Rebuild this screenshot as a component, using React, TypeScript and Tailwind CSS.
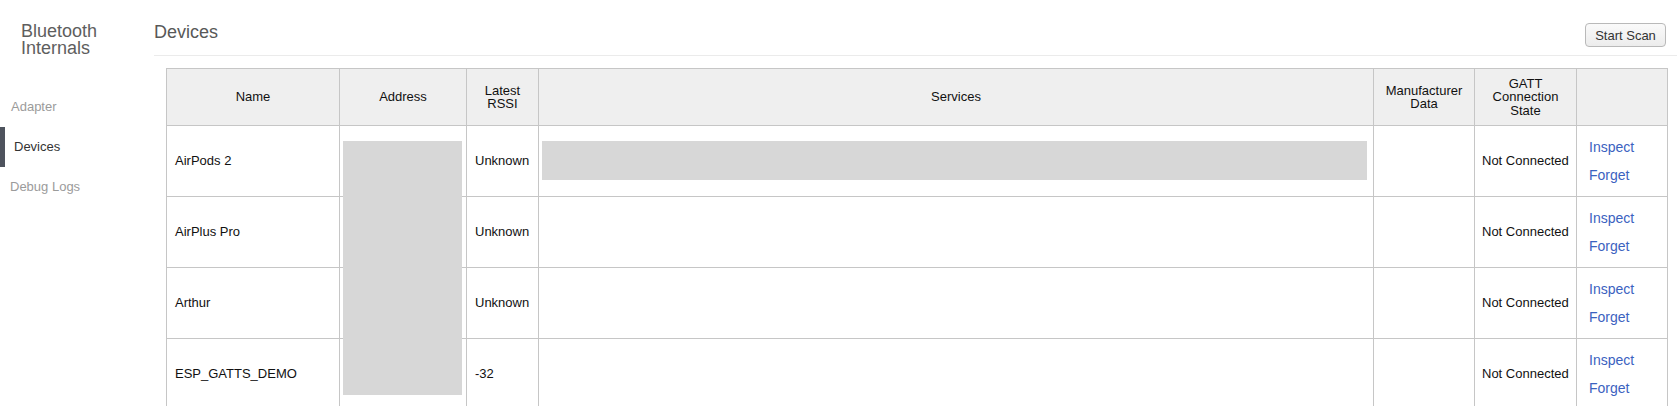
import React from "react";

const rows = [
  { name: "AirPods 2", rssi: "Unknown", services: true },
  { name: "AirPlus Pro", rssi: "Unknown", services: false },
  { name: "Arthur", rssi: "Unknown", services: false },
  { name: "ESP_GATTS_DEMO", rssi: "-32", services: false },
];

const cell = "border-r border-b border-[#c6c6c6] flex items-center whitespace-nowrap";

export default function App() {
  return (
    <div
      className="flex w-[1677px] h-[406px] overflow-hidden bg-white text-[13px] text-[#111]"
      style={{ fontFamily: '"Liberation Sans", Arial, sans-serif' }}
    >
      <aside className="w-[154px] shrink-0">
        <div className="pl-[21px] pt-[23px] text-[18px] leading-[17px] text-[#5e5e5e]">
          <div>Bluetooth</div>
          <div>Internals</div>
        </div>
        <nav className="mt-[30px] flex flex-col">
          <div className="h-[40px] flex items-center pl-[11px] text-[#9b9b9b]">Adapter</div>
          <div className="h-[40px] flex items-center border-l-[5px] border-[#4e535d] pl-[9px] text-[#333]">
            Devices
          </div>
          <div className="h-[40px] flex items-center pl-[10px] text-[#9b9b9b]">Debug Logs</div>
        </nav>
      </aside>
      <main className="flex-1 min-w-0">
        <header className="h-[56px] border-b border-[#ebebeb] flex justify-between items-start">
          <h1 className="mt-[21px] text-[18px] leading-[22px] text-[#585858]">Devices</h1>
          <button className="mt-[23px] mr-[11px] h-[24px] w-[81px] rounded-[4px] border border-[#b9b9b9] bg-gradient-to-b from-[#fafafa] to-[#ececec] text-[13px] text-[#333] leading-none">
            Start Scan
          </button>
        </header>
        <div className="relative ml-[12px] mt-[12px] w-[1502px]">
          <div className="grid grid-cols-[173px_127px_72px_835px_101px_102px_91px] border-l border-t border-[#c6c6c6]">
            {["Name", "Address", "Latest RSSI", "Services", "Manufacturer Data", "GATT Connection State", ""].map(
              (h, i) => (
                <div
                  key={i}
                  className="h-[57px] bg-[#efefef] border-r border-b border-[#c6c6c6] flex items-center justify-center text-center px-1 leading-[13.4px] text-[#111]"
                >
                  {h === "Latest RSSI" ? (
                    <span>
                      Latest
                      <br />
                      RSSI
                    </span>
                  ) : h === "Manufacturer Data" ? (
                    <span>
                      Manufacturer
                      <br />
                      Data
                    </span>
                  ) : h === "GATT Connection State" ? (
                    <span>
                      GATT
                      <br />
                      Connection
                      <br />
                      State
                    </span>
                  ) : (
                    h
                  )}
                </div>
              )
            )}
            {rows.map((r) => (
              <React.Fragment key={r.name}>
                <div className={`${cell} h-[71px] pl-2`}>{r.name}</div>
                <div className={`${cell} h-[71px] pl-2`}></div>
                <div className={`${cell} h-[71px] pl-2`}>{r.rssi}</div>
                <div className={`${cell} h-[71px]`}>
                  {r.services && <div className="ml-[3px] mb-[1px] h-[39px] w-[825px] bg-[#d7d7d7]" />}
                </div>
                <div className={`${cell} h-[71px] pl-2`}></div>
                <div className={`${cell} h-[71px] pl-[7px]`}>Not Connected</div>
                <div className="h-[71px] border-r border-b border-[#c6c6c6] flex flex-col justify-center pl-[12px] text-[14px] text-[#3b62bf]">
                  <a className="leading-[28px] cursor-pointer">Inspect</a>
                  <a className="leading-[28px] cursor-pointer">Forget</a>
                </div>
              </React.Fragment>
            ))}
          </div>
          <div className="absolute left-[177px] top-[73px] w-[119px] h-[254px] bg-[#d7d7d7]" />
        </div>
      </main>
    </div>
  );
}
